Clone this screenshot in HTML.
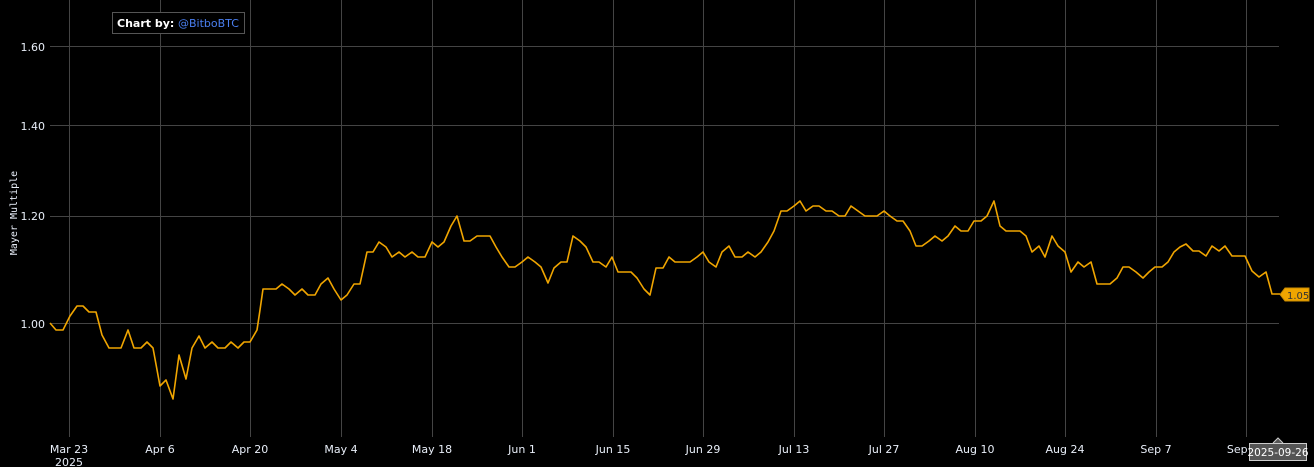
<!DOCTYPE html>
<html><head><meta charset="utf-8"><style>
html,body{margin:0;padding:0;background:#000;width:1314px;height:467px;overflow:hidden}
svg{display:block}
text{font-family:"DejaVu Sans","Liberation Sans",sans-serif;font-size:11px;fill:#e8eef8}
</style></head><body>
<svg width="1314" height="467" viewBox="0 0 1314 467" xmlns="http://www.w3.org/2000/svg">
<g stroke="#444" stroke-width="1">
<line x1="69.5" y1="0" x2="69.5" y2="437"/>
<line x1="160.5" y1="0" x2="160.5" y2="437"/>
<line x1="250.5" y1="0" x2="250.5" y2="437"/>
<line x1="341.5" y1="0" x2="341.5" y2="437"/>
<line x1="432.5" y1="0" x2="432.5" y2="437"/>
<line x1="522.5" y1="0" x2="522.5" y2="437"/>
<line x1="613.5" y1="0" x2="613.5" y2="437"/>
<line x1="703.5" y1="0" x2="703.5" y2="437"/>
<line x1="794.5" y1="0" x2="794.5" y2="437"/>
<line x1="884.5" y1="0" x2="884.5" y2="437"/>
<line x1="975.5" y1="0" x2="975.5" y2="437"/>
<line x1="1065.5" y1="0" x2="1065.5" y2="437"/>
<line x1="1156.5" y1="0" x2="1156.5" y2="437"/>
<line x1="1246.5" y1="0" x2="1246.5" y2="437"/>
<line x1="50" y1="46.5" x2="1279" y2="46.5"/>
<line x1="50" y1="125.5" x2="1279" y2="125.5"/>
<line x1="50" y1="216.5" x2="1279" y2="216.5"/>
<line x1="50" y1="323.5" x2="1279" y2="323.5"/>
</g>
<g text-anchor="end">
<text x="45" y="51">1.60</text>
<text x="45" y="130">1.40</text>
<text x="45" y="220">1.20</text>
<text x="45" y="328">1.00</text>
</g>
<text transform="translate(17,213) rotate(-90)" text-anchor="middle" style="font-family:'DejaVu Sans Mono','Liberation Mono',monospace;font-size:10px">Mayer Multiple</text>
<g text-anchor="middle">
<text x="69" y="453">Mar 23</text>
<text x="69" y="466">2025</text>
<text x="160" y="453">Apr 6</text>
<text x="250" y="453">Apr 20</text>
<text x="341" y="453">May 4</text>
<text x="432" y="453">May 18</text>
<text x="522" y="453">Jun 1</text>
<text x="613" y="453">Jun 15</text>
<text x="703" y="453">Jun 29</text>
<text x="794" y="453">Jul 13</text>
<text x="884" y="453">Jul 27</text>
<text x="975" y="453">Aug 10</text>
<text x="1065" y="453">Aug 24</text>
<text x="1156" y="453">Sep 7</text>
<text x="1246" y="453">Sep 21</text>
</g>
<polyline fill="none" stroke="#f0a500" stroke-width="1.6" stroke-linejoin="round" points="50,323 56,330 63,330 70,316 77,306 83,306 89,312 96,312 102,335 109,348 115,348 121,348 128,330 134,348 141,348 147,342 153,348 160,386 166,380 173,399 179,355 186,379 192,348 199,336 205,348 212,342 218,348 225,348 231,342 238,348 244,342 250,342 257,330 260,310 263,289 276,289 282,284 289,289 295,295 302,289 308,295 315,295 321,284 328,278 334,289 341,300 347,295 354,284 360,284 367,252 373,252 379,242 386,247 392,257 399,252 405,257 412,252 418,257 425,257 432,242 438,247 444,242 451,226 457,216 464,241 470,241 477,236 483,236 490,236 496,247 502,257 509,267 515,267 522,262 528,257 535,262 541,267 548,283 554,268 561,262 567,262 573,236 580,241 586,247 593,262 599,262 606,267 612,257 618,272 625,272 631,272 637,278 644,289 650,295 656,268 663,268 669,257 675,262 682,262 690,262 697,257 703,252 709,262 716,267 722,252 729,246 735,257 742,257 748,252 755,257 761,252 768,242 774,231 781,211 787,211 794,206 800,201 806,211 813,206 819,206 826,211 832,211 839,216 845,216 851,206 858,211 865,216 871,216 877,216 884,211 890,216 897,221 903,221 910,231 916,246 922,246 929,241 935,236 942,241 948,236 955,226 961,231 968,231 974,221 981,221 987,216 994,201 1000,226 1006,231 1013,231 1020,231 1026,236 1032,252 1039,246 1045,257 1052,236 1058,246 1065,252 1071,272 1078,262 1084,267 1091,262 1097,284 1104,284 1110,284 1117,278 1123,267 1129,267 1136,272 1143,278 1149,272 1155,267 1162,267 1168,262 1174,252 1180,247 1186,244 1193,251 1199,251 1206,256 1212,246 1219,251 1225,246 1232,256 1245,256 1252,271 1259,277 1266,272 1272,294 1280,294"/>
<path d="M1280,294.5 L1285,288 L1309,288 L1309,301 L1285,301 Z" fill="#f0a500" stroke="#c98a00" stroke-width="1"/>
<text x="1287" y="299" style="font-size:10px;fill:#333">1.05</text>
<rect x="112.5" y="12.5" width="132" height="21" fill="#000" stroke="#555" stroke-width="1"/>
<text x="117" y="27" style="font-weight:bold;fill:#fff">Chart by:</text>
<text x="178" y="27" style="fill:#4a7ff0">@BitboBTC</text>
<path d="M1273,443 L1278,438 L1283,443" fill="#555" stroke="#ccc" stroke-width="1"/>
<rect x="1249.5" y="443.5" width="57" height="17" fill="#555" stroke="#ccc" stroke-width="1"/>
<text x="1278" y="456" text-anchor="middle" style="font-size:10.5px;fill:#fff">2025-09-26</text>
</svg>
</body></html>
